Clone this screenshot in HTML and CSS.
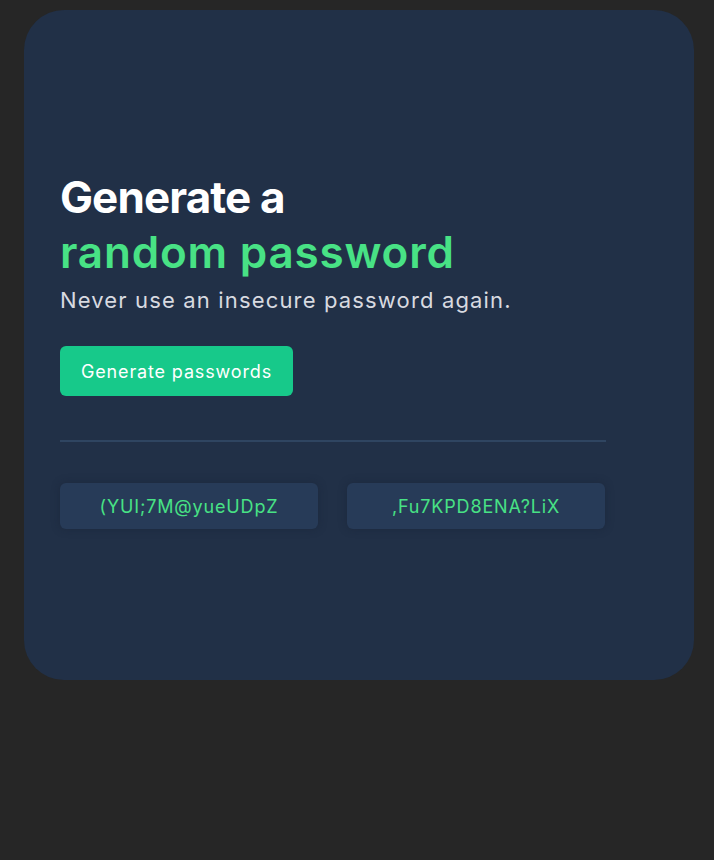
FILE: index.html
```html
<!DOCTYPE html>
<html lang="en">
<head>
<meta charset="utf-8">
<title>Password Generator</title>
<link rel="stylesheet" href="styles.css">
</head>
<body>
<main class="card">
  <h1 class="title">Generate a<br><span class="accent">random password</span></h1>
  <p class="subtitle">Never use an insecure password again.</p>
  <button class="btn">Generate passwords</button>
  <hr class="divider">
  <div class="results">
    <div class="pw">(YUI;7M@yueUDpZ</div>
    <div class="pw">,Fu7KPD8ENA?LiX</div>
  </div>
</main>
</body>
</html>
```
FILE: styles.css
```css
* { box-sizing: border-box; }
html, body { margin: 0; padding: 0; }
body {
  background: #262626;
  font-family: Inter, "Noto Sans", sans-serif;
  min-height: 860px;
}
.card {
  margin: 10px 0 0 24px;
  width: 670px;
  height: 670px;
  border-radius: 40px;
  background: #213047;
  padding: 160px 88px 0 36px;
}
.title {
  margin: 0;
  font-size: 44px;
  line-height: 55px;
  font-weight: 700;
  letter-spacing: -0.9px;
  color: #ffffff;
}
.accent {
  color: #48e285;
  font-weight: 600;
  letter-spacing: 0.8px;
}
.subtitle {
  margin: 6px 0 0;
  font-size: 22px;
  line-height: 28px;
  color: #d8dae0;
  letter-spacing: 1.15px;
}
.btn {
  margin-top: 32px;
  height: 50px;
  padding: 0 21px;
  border: none;
  border-radius: 6px;
  background: #17c98a;
  color: #ffffff;
  font-family: Inter, sans-serif;
  font-size: 18px;
  letter-spacing: 0.85px;
  display: block;
}
.divider {
  margin: 44px 0 0;
  border: none;
  height: 2px;
  background: #2f4561;
}
.results {
  margin-top: 41px;
  display: grid;
  grid-template-columns: 258px 258px;
  gap: 29px;
}
.pw {
  height: 46px;
  border-radius: 6px;
  background: #273b58;
  color: #48e285;
  font-size: 18px;
  letter-spacing: 0.85px;
  display: flex;
  align-items: center;
  justify-content: center;
  box-shadow: 0 0 8px rgba(20, 30, 45, 0.35);
}
```
